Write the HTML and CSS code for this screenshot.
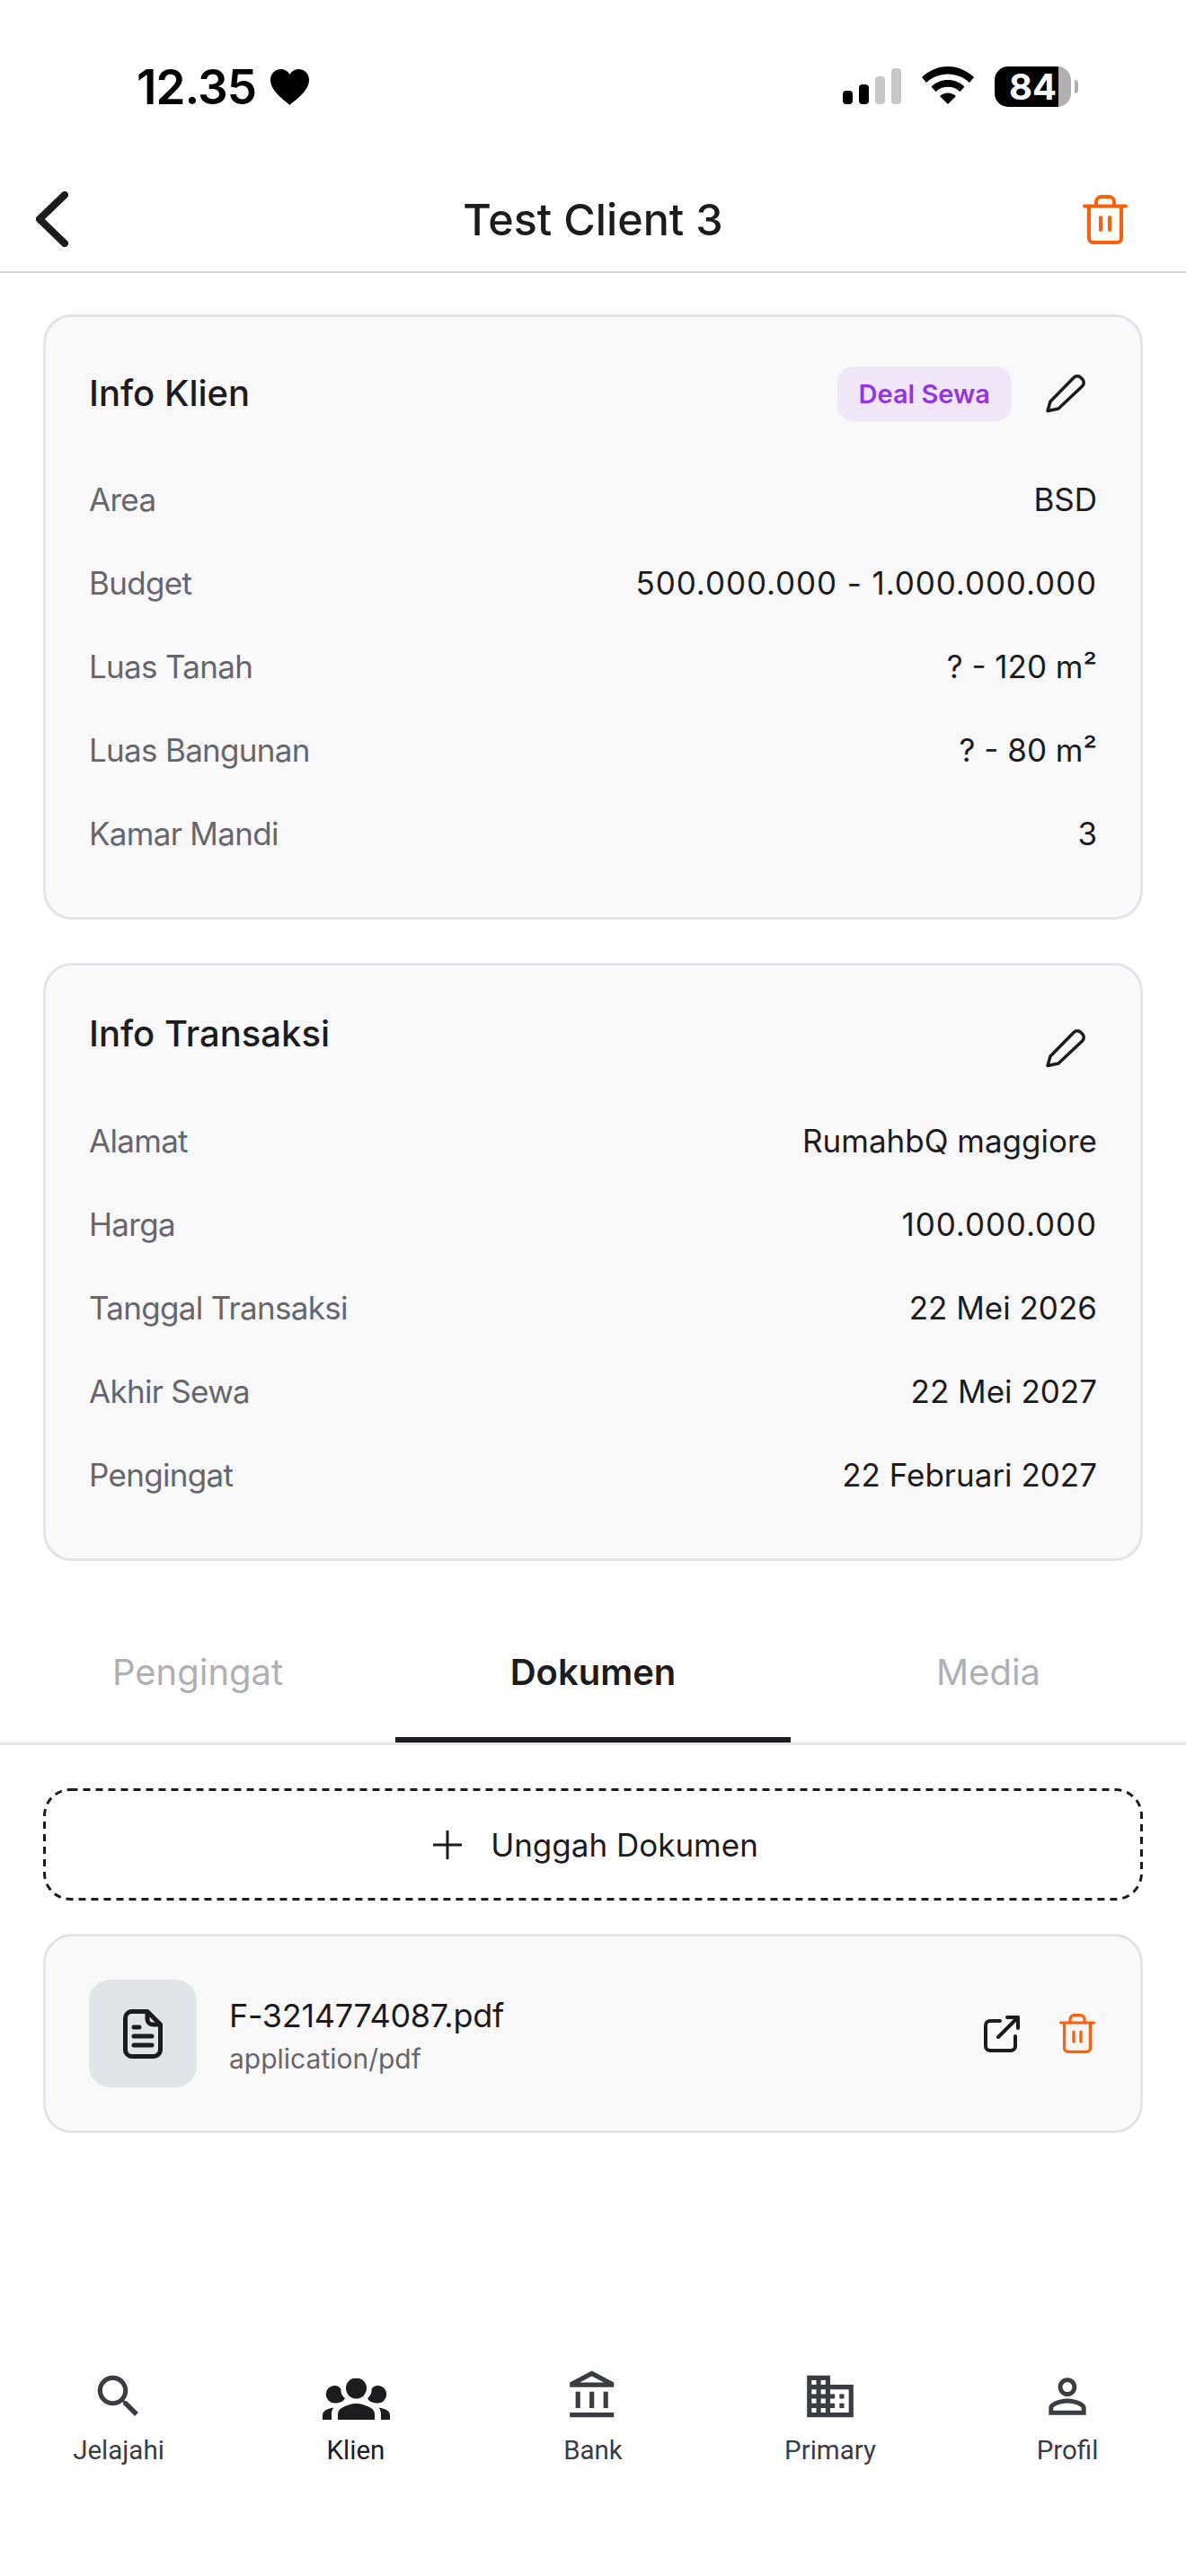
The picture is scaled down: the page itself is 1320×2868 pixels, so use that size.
FILE: index.html
```html
<!DOCTYPE html>
<html lang="en">
<head>
  <meta charset="UTF-8" />
  <meta name="viewport" content="width=device-width, initial-scale=1.0" />
  <title>Test Client 3</title>
  <link rel="stylesheet" href="styles.css">
</head>
<body>
  <div class="status-bar">
    <div class="status-time">
      <span>12.35</span>
      <svg class="status-heart" viewBox="0 0 43 40"><path d="M21.500 40C17 35.500 0 25 0 12 0 5 5 0 11.500 0c4.500 0 8 2.500 10 6 2-3.500 5.500-6 10-6C38 0 43 5 43 12c0 13-17 23.500-21.500 28z"/></svg>
    </div>
    <div class="status-icons">
      <div class="signal">
        <span class="bar bar-1"></span>
        <span class="bar bar-2"></span>
        <span class="bar bar-3 off"></span>
        <span class="bar bar-4 off"></span>
      </div>
      <svg class="wifi" viewBox="0 0 58 42"><path d="M29 0c11 0 21 4.500 29 12l-5 6C46.500 12 38 8.500 29 8.500S11.500 12 5 18l-5-6C8 4.500 18 0 29 0z"/><path d="M29 15c7 0 13.500 2.500 18.500 7.500l-5 5.500C39 24.500 34 22.800 29 22.800S19 24.500 15.500 28l-5-5.500C15.500 17.500 22 15 29 15z"/><path d="M29 29.500c3.500 0 6.500 1.200 9 3.500L29 42l-9-9c2.500-2.300 5.500-3.500 9-3.500z"/></svg>
      <div class="battery">
        <div class="battery-body"><span>84</span></div>
        <span class="battery-nub"></span>
      </div>
    </div>
  </div>

  <header class="top-bar">
    <button class="back-btn">
      <svg viewBox="0 0 36 62" width="36" height="62"><path d="M32 4 4 31l28 27" fill="none" stroke="#1c1c1e" stroke-width="8" stroke-linecap="round" stroke-linejoin="round"/></svg>
    </button>
    <h1 class="top-title">Test Client 3</h1>
    <button class="trash-btn">
      <svg class="icon-trash" viewBox="0 0 50 55" width="50" height="55"><use href="#trash"/></svg>
    </button>
  </header>

  <main class="content">
    <section class="card">
      <div class="card-head">
        <h2 class="card-title">Info Klien</h2>
        <div class="card-actions">
          <span class="badge">Deal Sewa</span>
          <svg class="icon-pencil" viewBox="0 0 45 44" width="45" height="44"><use href="#pencil"/></svg>
        </div>
      </div>
      <dl class="rows">
        <div class="row"><dt>Area</dt><dd>BSD</dd></div>
        <div class="row"><dt>Budget</dt><dd class="num">500.000.000 - 1.000.000.000</dd></div>
        <div class="row"><dt>Luas Tanah</dt><dd>? - 120 m²</dd></div>
        <div class="row"><dt>Luas Bangunan</dt><dd>? - 80 m²</dd></div>
        <div class="row"><dt>Kamar Mandi</dt><dd>3</dd></div>
      </dl>
    </section>

    <section class="card">
      <div class="card-head card-head-top">
        <h2 class="card-title">Info Transaksi</h2>
        <svg class="icon-pencil" viewBox="0 0 45 44" width="45" height="44"><use href="#pencil"/></svg>
      </div>
      <dl class="rows">
        <div class="row"><dt>Alamat</dt><dd>RumahbQ maggiore</dd></div>
        <div class="row"><dt>Harga</dt><dd class="num">100.000.000</dd></div>
        <div class="row"><dt>Tanggal Transaksi</dt><dd>22 Mei 2026</dd></div>
        <div class="row"><dt>Akhir Sewa</dt><dd>22 Mei 2027</dd></div>
        <div class="row"><dt>Pengingat</dt><dd>22 Februari 2027</dd></div>
      </dl>
    </section>
  </main>

  <nav class="tabs">
    <div class="tab">Pengingat</div>
    <div class="tab active">Dokumen</div>
    <div class="tab">Media</div>
  </nav>

  <section class="docs">
    <button class="upload-btn">
      <svg class="upload-dash" viewBox="0 0 1224 125" width="1224" height="125"><rect x="1.500" y="1.500" width="1221" height="122" rx="29" fill="none" stroke="#1c1c1e" stroke-width="3" stroke-dasharray="8 6"/></svg>
      <svg viewBox="0 0 32 32" width="32" height="32"><path d="M16 1v30M1 16h30" fill="none" stroke="#1c1c1e" stroke-width="3" stroke-linecap="round"/></svg>
      <span>Unggah Dokumen</span>
    </button>

    <div class="file-card">
      <div class="file-thumb">
        <svg viewBox="0 0 44 55" width="44" height="55"><path d="M9 2.500h18L41.500 17v28a7.500 7.500 0 0 1-7.500 7.500H9A7.500 7.500 0 0 1 2.500 45V10A7.500 7.500 0 0 1 9 2.500z" fill="none" stroke="#1c1c1e" stroke-width="5" stroke-linejoin="round"/><path d="M27 2.500V11a6 6 0 0 0 6 6h8.500" fill="none" stroke="#1c1c1e" stroke-width="5" stroke-linejoin="round"/><path d="M12 20h6M12 30h20M12 40h20" fill="none" stroke="#1c1c1e" stroke-width="5" stroke-linecap="round"/></svg>
      </div>
      <div class="file-info">
        <div class="file-name">F-3214774087.pdf</div>
        <div class="file-type">application/pdf</div>
      </div>
      <div class="file-actions">
        <svg viewBox="0 0 40 41" width="40" height="41"><path d="M18 6H7a5 5 0 0 0-5 5v23a5 5 0 0 0 5 5h23a5 5 0 0 0 5-5V23" fill="none" stroke="#1c1c1e" stroke-width="4" stroke-linecap="round"/><path d="M26 2h12v12M38 2 16 24" fill="none" stroke="#1c1c1e" stroke-width="4" stroke-linecap="round" stroke-linejoin="round"/></svg>
        <svg class="icon-trash" viewBox="0 0 50 55" width="40" height="44"><use href="#trash"/></svg>
      </div>
    </div>
  </section>

  <nav class="bottom-nav">
    <div class="nav-item">
      <svg viewBox="0 0 24 24" width="62" height="62"><path d="M15.500 14h-.79l-.28-.27C15.410 12.590 16 11.110 16 9.500 16 5.910 13.090 3 9.500 3S3 5.910 3 9.500 5.910 16 9.500 16c1.610 0 3.090-.59 4.230-1.570l.27.28v.79l5 4.990L20.490 19l-4.990-5zm-6 0C7.010 14 5 11.990 5 9.500S7.010 5 9.500 5 14 7.010 14 9.500 11.990 14 9.500 14z"/></svg>
      <span>Jelajahi</span>
    </div>
    <div class="nav-item active">
      <svg class="icon-groups" viewBox="0 0 75 46" width="75" height="46"><circle cx="37.500" cy="11" r="11.500"/><path d="M13.500 8c3 0 5.500 1.500 7 4-.5 4 1.500 8 4.500 10-1.500 3-4.500 5.500-11.500 5.500a9.700 9.700 0 0 1 0-19.500zM61.500 8c-3 0-5.500 1.500-7 4 .5 4-1.500 8-4.500 10 1.500 3 4.500 5.500 11.500 5.500a9.700 9.700 0 0 0 0-19.500z"/><path d="M17 46v-6c0-3 1.500-5.500 4-7 5-3 11-5 16.500-5s11.500 2 16.500 5c2.500 1.500 4 4 4 7v6zM0 46v-5c0-3 2-5 4-6 2.500-1 5-2 8.500-2.500-1.500 2-2.500 4-2.500 7v6.500zM75 46v-5c0-3-2-5-4-6-2.500-1-5-2-8.500-2.500 1.500 2 2.500 4 2.500 7v6.500z"/></svg>
      <span>Klien</span>
    </div>
    <div class="nav-item">
      <svg viewBox="0 0 24 24" width="62" height="62"><path d="M6.500 10h-2v7h2v-7zm6 0h-2v7h2v-7zm8.500 9H2v2h19v-2zm-2.500-9h-2v7h2v-7zM11.500 1L2 6v2h19V6l-9.500-5zM6.260 6l5.240-2.730L16.740 6H6.260z"/></svg>
      <span>Bank</span>
    </div>
    <div class="nav-item">
      <svg viewBox="0 0 24 24" width="62" height="62"><path d="M12 7V3H2v18h20V7H12zM6 19H4v-2h2v2zm0-4H4v-2h2v2zm0-4H4V9h2v2zm0-4H4V5h2v2zm4 12H8v-2h2v2zm0-4H8v-2h2v2zm0-4H8V9h2v2zm0-4H8V5h2v2zm10 12h-8v-2h2v-2h-2v-2h2v-2h-2V9h8v10zm-2-8h-2v2h2v-2zm0 4h-2v2h2v-2z"/></svg>
      <span>Primary</span>
    </div>
    <div class="nav-item">
      <svg viewBox="0 0 24 24" width="62" height="62"><path d="M12 5.900c1.160 0 2.100.94 2.100 2.100s-.94 2.100-2.100 2.100S9.900 9.160 9.900 8s.94-2.100 2.100-2.100m0 9c2.970 0 6.100 1.460 6.100 2.100v1.100H5.900V17c0-.64 3.130-2.100 6.100-2.100M12 4C9.790 4 8 5.790 8 8s1.790 4 4 4 4-1.790 4-4-1.790-4-4-4zm0 9c-2.670 0-8 1.340-8 4v3h16v-3c0-2.660-5.330-4-8-4z"/></svg>
      <span>Profil</span>
    </div>
  </nav>

  <svg class="sprites" width="0" height="0">
    <symbol id="trash" viewBox="0 0 50 55">
      <path d="M2 12.500h46" fill="none" stroke="#ff5f07" stroke-width="4" stroke-linecap="round"/>
      <path d="M7 13v35a5 5 0 0 0 5 5h26a5 5 0 0 0 5-5V13" fill="none" stroke="#ff5f07" stroke-width="4"/>
      <path d="M15 12V8a6 6 0 0 1 6-6h8a6 6 0 0 1 6 6v4" fill="none" stroke="#ff5f07" stroke-width="4"/>
      <path d="M20 25v14M30 25v14" fill="none" stroke="#ff5f07" stroke-width="4" stroke-linecap="round"/>
    </symbol>
    <symbol id="pencil" viewBox="0 0 45 44">
      <path d="M2 41.500 5 31 31 4.500a5.500 5.500 0 0 1 8 0l1.500 1.500a5.500 5.500 0 0 1 0 8L14 39z" fill="none" stroke="#1c1c1e" stroke-width="3.500" stroke-linejoin="round"/>
    </symbol>
  </svg>
</body>
</html>
```

FILE: styles.css
```css
* {
  margin: 0;
  padding: 0;
  box-sizing: border-box;
}

body {
  font-family: Inter, 'Noto Sans', sans-serif;
  color: #1c1c1e;
  background: #ffffff;
  width: 1320px;
  min-height: 2868px;
  display: flex;
  flex-direction: column;
}

button {
  background: none;
  border: none;
  font-family: inherit;
  color: inherit;
}

.sprites {
  position: absolute;
}

.status-bar {
  height: 186px;
  display: flex;
  justify-content: space-between;
  align-items: flex-start;
  padding: 74px 120px 0 152px;
}

.status-time {
  display: flex;
  align-items: center;
  gap: 16px;
  height: 46px;
  font-size: 53px;
  font-weight: 600;
  color: #000;
  letter-spacing: -1px;
}

.status-heart {
  width: 43px;
  height: 40px;
  fill: #000;
}

.status-icons {
  display: flex;
  align-items: flex-start;
  gap: 23px;
}

.signal {
  display: flex;
  align-items: flex-end;
  gap: 7px;
  height: 42px;
}

.bar {
  width: 11px;
  border-radius: 4px;
  background: #000;
}

.bar.off {
  background: #c7c7c7;
}

.bar-1 { height: 15px; }
.bar-2 { height: 22px; }
.bar-3 { height: 31px; }
.bar-4 { height: 40px; }

.wifi {
  width: 58px;
  height: 42px;
  fill: #000;
}

.battery {
  display: flex;
  align-items: center;
  gap: 4px;
}

.battery-body {
  width: 85px;
  height: 45px;
  border-radius: 15px;
  background: linear-gradient(to right, #000 84%, #b0b0b0 84%);
  color: #fff;
  font-size: 40px;
  font-weight: 700;
  display: flex;
  align-items: center;
  padding-left: 16px;
}

.battery-nub {
  width: 4px;
  height: 15px;
  border-radius: 0 4px 4px 0;
  background: #b0b0b0;
}

.top-bar {
  height: 118px;
  display: flex;
  align-items: center;
  justify-content: space-between;
  padding: 0 65px 0 40px;
  border-bottom: 2px solid #d4d4d6;
  position: relative;
}

.back-btn, .trash-btn {
  display: flex;
}

.top-title {
  font-size: 48.500px;
  font-weight: 500;
  position: absolute;
  left: 0;
  right: 0;
  text-align: center;
}

.content {
  padding: 46px 48px 0;
  display: flex;
  flex-direction: column;
  gap: 48px;
}

.card {
  background: #f8f8f8;
  border: 3px solid #e3e4e8;
  border-radius: 32px;
  padding: 48px 48px 72px;
}

.card-head {
  display: flex;
  justify-content: space-between;
  align-items: center;
  height: 74px;
}

.card-title {
  font-size: 40px;
  font-weight: 500;
  margin-bottom: 2px;
}

.card-actions {
  display: flex;
  align-items: center;
  gap: 38px;
}

.badge {
  background: #efe6f8;
  color: #9333ea;
  font-size: 29px;
  font-weight: 600;
  padding: 0 24px;
  height: 61px;
  line-height: 61px;
  border-radius: 18px;
}

.icon-pencil {
  margin-right: 12px;
}

.card-head-top {
  align-items: flex-start;
  height: 68px;
}

.card-head-top .card-title {
  margin-top: 3px;
}

.card-head-top .icon-pencil {
  margin-top: 22px;
}

.rows {
  display: flex;
  flex-direction: column;
  margin-top: 59px;
  gap: 50px;
}

.card-head-top + .rows {
  margin-top: 57px;
}

.row {
  display: flex;
  justify-content: space-between;
  align-items: center;
  height: 43px;
  font-size: 35px;
}

.row dt {
  color: #66666c;
  letter-spacing: -0.7px;
}

.row dd {
  color: #1c1c1e;
}

.row dd.num {
  letter-spacing: 0.900px;
}

.tabs {
  display: grid;
  grid-template-columns: repeat(3, 1fr);
  margin-top: 73px;
  height: 132px;
  border-bottom: 3px solid #e3e4e8;
}

.tab {
  display: flex;
  align-items: center;
  justify-content: center;
  padding-bottom: 29px;
  font-size: 40px;
  color: #b0b0b4;
}

.tab.active {
  color: #1c1c1e;
  font-weight: 600;
  border-bottom: 6px solid #1c1c1e;
  padding-bottom: 23px;
}

.docs {
  padding: 48px 48px 0;
  display: flex;
  flex-direction: column;
  gap: 37px;
}

.upload-btn {
  height: 125px;
  position: relative;
  display: flex;
  align-items: center;
  justify-content: center;
  gap: 32px;
  padding-left: 6px;
  font-size: 35px;
}

.upload-dash {
  position: absolute;
  left: 0;
  top: 0;
}

.file-card {
  background: #f8f8f8;
  border: 3px solid #e3e4e8;
  border-radius: 32px;
  padding: 48px;
  display: flex;
  align-items: center;
  gap: 36px;
}

.file-thumb {
  width: 120px;
  height: 120px;
  border-radius: 24px;
  background: #e3e4e8;
  display: flex;
  align-items: center;
  justify-content: center;
}

.file-info {
  flex: 1;
  padding-top: 3px;
}

.file-name {
  font-size: 36px;
  letter-spacing: -0.3px;
}

.file-type {
  font-size: 30px;
  color: #66666c;
  margin-top: 8px;
}

.file-actions {
  display: flex;
  align-items: center;
  gap: 44px;
  padding-right: 2px;
}

.bottom-nav {
  margin-top: auto;
  display: grid;
  grid-template-columns: repeat(5, 264px);
  padding-bottom: 123px;
}

.nav-item {
  display: flex;
  flex-direction: column;
  align-items: center;
  gap: 12px;
  font-family: Roboto, sans-serif;
  font-size: 29.500px;
  color: #3c3c43;
}

.nav-item svg {
  fill: #3c3c43;
}

.nav-item.active {
  color: #1c1c1e;
}

.nav-item.active svg {
  fill: #1c1c1e;
}

.nav-item .icon-groups {
  margin: 11px 0 5px;
}
```
